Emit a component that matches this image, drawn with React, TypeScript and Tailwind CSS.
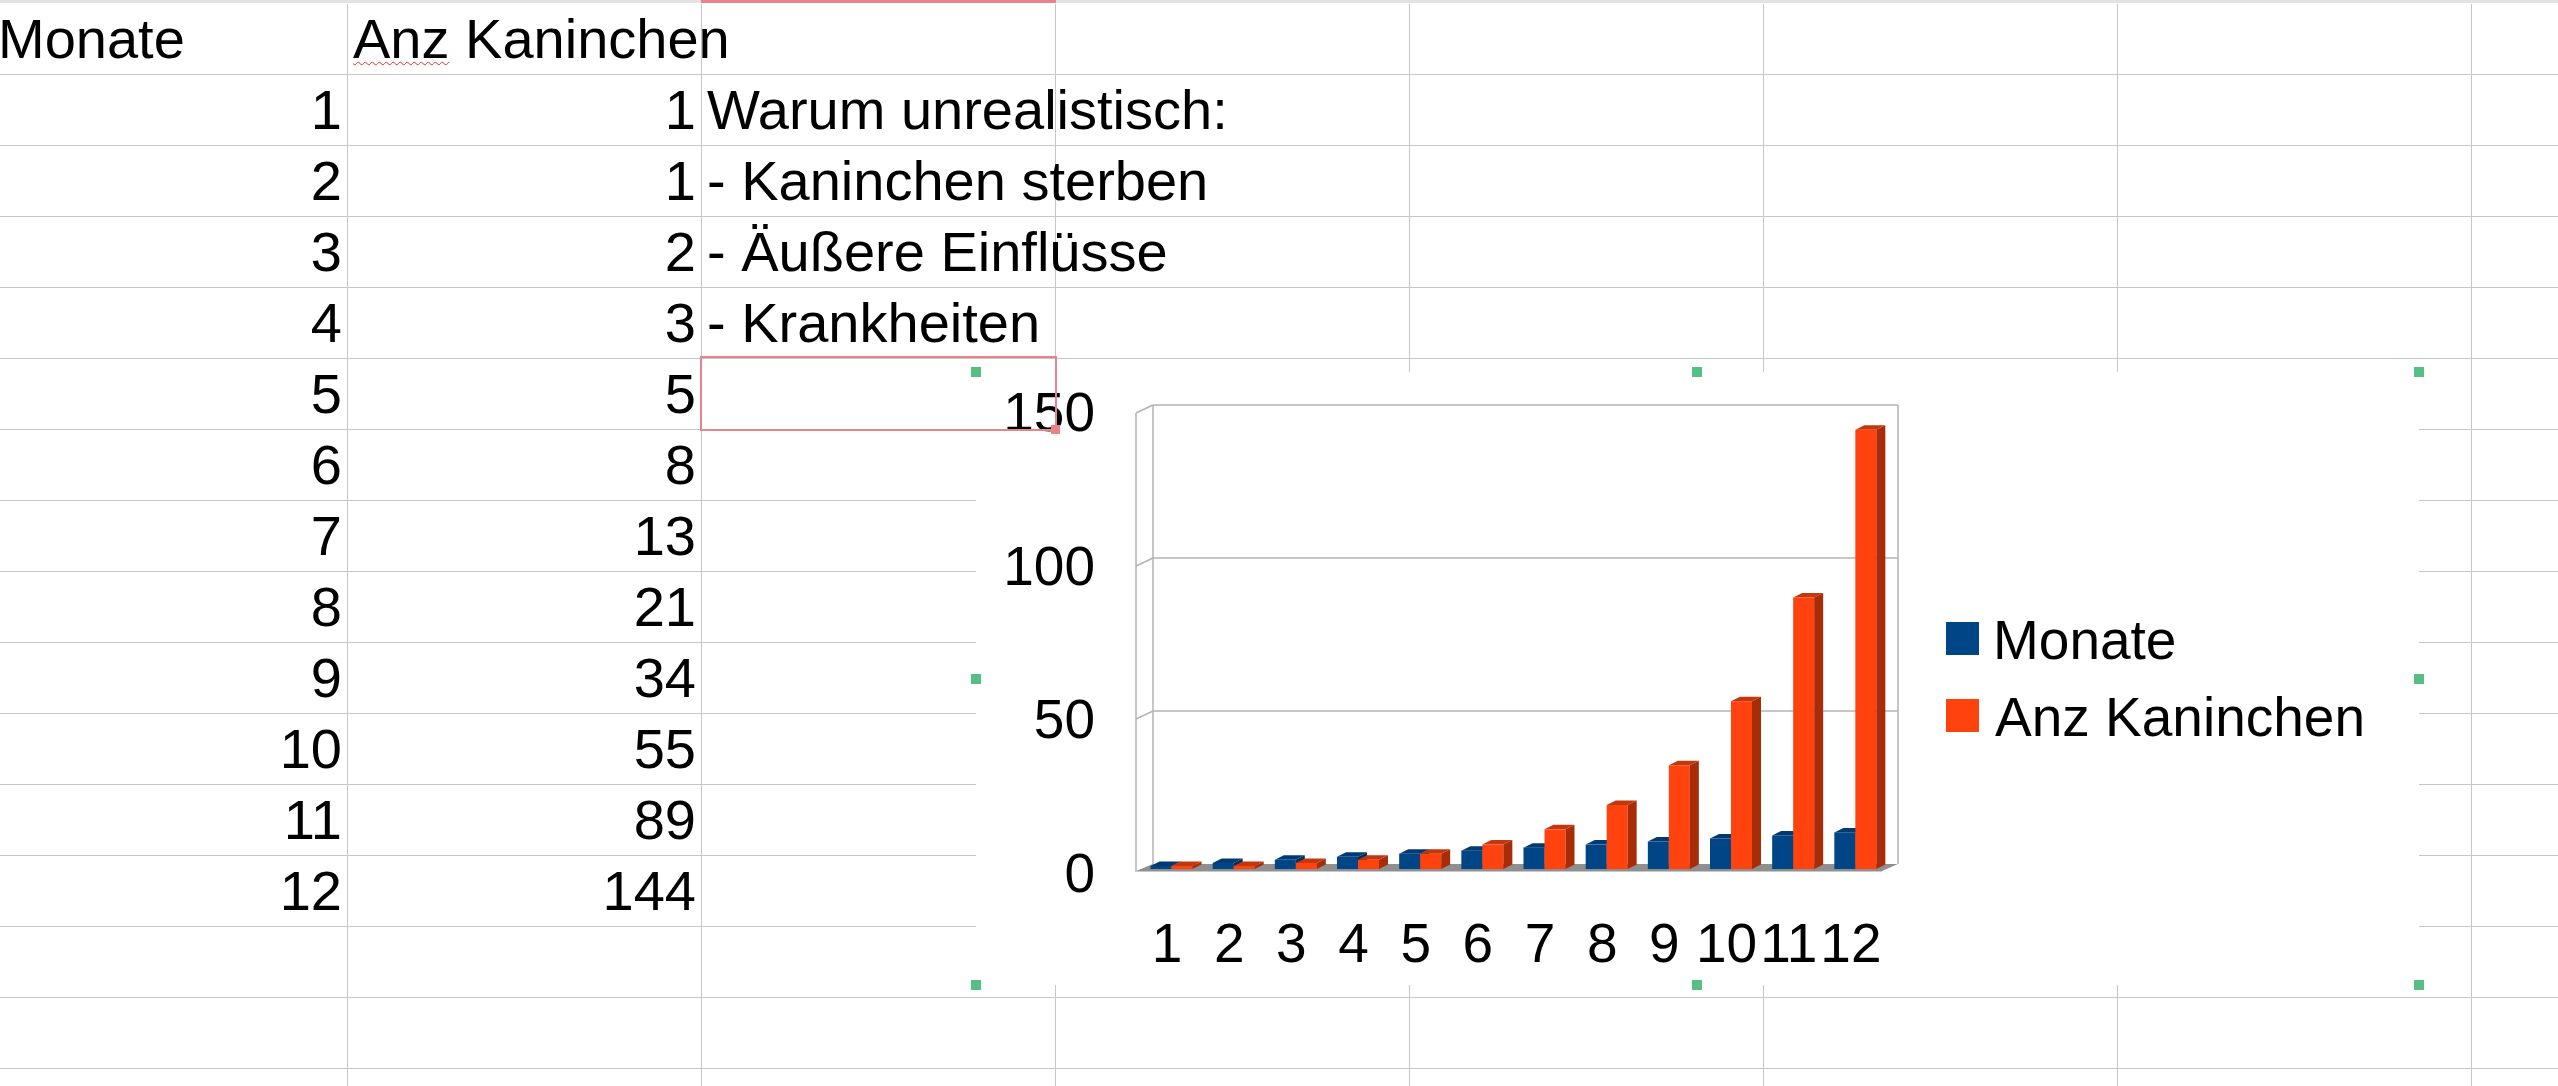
const rows: [string, string, string][] = [
  ["Monate", "Anz Kaninchen", ""],
  ["1", "1", "Warum unrealistisch:"],
  ["2", "1", "- Kaninchen sterben"],
  ["3", "2", "- Äußere Einflüsse"],
  ["4", "3", "- Krankheiten"],
  ["5", "5", ""],
  ["6", "8", ""],
  ["7", "13", ""],
  ["8", "21", ""],
  ["9", "34", ""],
  ["10", "55", ""],
  ["11", "89", ""],
  ["12", "144", ""],
  ["", "", ""],
  ["", "", ""],
  ["", "", ""],
];

const kaninchen = [1, 1, 2, 3, 5, 8, 13, 21, 34, 55, 89, 144];

// chart geometry, in page pixels
const frontLeft = 1136;
const frontRight = 1882;
const catW = (frontRight - frontLeft) / 12;
const base = 869;
const unit = 3.05;
const dx = 9;
const dy = -4.5;

function Bar({ x, w, v, front, side, top }: { x: number; w: number; v: number; front: string; side: string; top: string }) {
  const y = base - v * unit;
  return (
    <g>
      <rect x={x} y={y} width={w} height={base - y} fill={front} />
      <polygon points={`${x + w},${y} ${x + w + dx},${y + dy} ${x + w + dx},${base + dy} ${x + w},${base}`} fill={side} />
      <polygon points={`${x},${y} ${x + dx},${y + dy} ${x + w + dx},${y + dy} ${x + w},${y}`} fill={top} />
    </g>
  );
}

function Chart() {
  const grid = "#b3b3b3";
  const levels = [405, 558, 711];
  return (
    <svg width="1443" height="613" viewBox="976 372 1443 613" className="block">
      {/* floor */}
      <polygon points="1136,871 1153,864 1898,864 1882,871" fill="#8f8f8f" />
      <line x1="1135" y1="871.5" x2="1882" y2="871.5" stroke="#c8c8c8" strokeWidth="1" />
      {/* walls */}
      <line x1="1153" y1="405" x2="1153" y2="864" stroke={grid} strokeWidth="1.5" />
      <line x1="1898" y1="405" x2="1898" y2="864" stroke={grid} strokeWidth="1.5" />
      <line x1="1136" y1="413" x2="1136" y2="871" stroke={grid} strokeWidth="1.5" />
      {levels.map((y) => (
        <g key={y}>
          <line x1="1153" y1={y} x2="1898" y2={y} stroke={grid} strokeWidth="1.5" />
          <line x1="1136" y1={y + 8} x2="1153" y2={y} stroke={grid} strokeWidth="1.5" />
        </g>
      ))}

      {kaninchen.map((k, i) => {
        const x = frontLeft + catW * i + 14.5;
        return (
          <g key={i}>
            <Bar x={x} w={21} v={i + 1} front="#004586" side="#002f5c" top="#003a72" />
            <Bar x={x + 21} w={21} v={k} front="#ff420e" side="#a82c08" top="#c4360b" />
          </g>
        );
      })}

      <g fontFamily="'Liberation Sans', Arial, sans-serif" fontSize="55" fill="#000">
        {["150", "100", "50", "0"].map((t, i) => (
          <text key={t} x="1095" y={431 + i * 153.5} textAnchor="end">
            {t}
          </text>
        ))}
        {kaninchen.map((_, i) => (
          <text key={i} x={frontLeft + catW * i + catW / 2} y="962" textAnchor="middle">
            {i + 1}
          </text>
        ))}
        <rect x="1946" y="622" width="33" height="33" fill="#004586" />
        <rect x="1946" y="699" width="33" height="33" fill="#ff420e" />
        <text x="1993" y="659">Monate</text>
        <text x="1995" y="736">Anz Kaninchen</text>
      </g>
    </svg>
  );
}

function Cell({ text, right, wide }: { text: string; right?: boolean; wide?: boolean }) {
  return (
    <div
      className={`flex h-full shrink-0 items-end whitespace-nowrap border-r border-[#c6c6c6] px-[5px] pb-[7px] ${
        wide ? "w-[355px]" : "w-[354px]"
      } ${right ? "justify-end" : "justify-start"}`}
    >
      {text}
    </div>
  );
}

export default function App() {
  return (
    <div className="relative h-[1086px] w-[2558px] overflow-hidden bg-white font-['Liberation_Sans',Arial,sans-serif] text-[56px] leading-none text-black">
      {/* column header edge */}
      <div className="flex h-[3px]">
        <div className="w-[701px] bg-[#e3e3e3]" />
        <div className="w-[355px] bg-[#e8838a]" />
        <div className="flex-1 bg-[#e3e3e3]" />
      </div>

      <div className="-ml-[7px] flex flex-col pt-[1px]">
        {rows.map(([a, b, c], r) => (
          <div key={r} className="flex h-[71px] border-b border-[#c6c6c6]">
            {r === 0 ? (
              <>
                <Cell text={a} wide />
                <div className="flex h-full w-[354px] shrink-0 items-end whitespace-nowrap border-r border-[#c6c6c6] px-[5px] pb-[7px]">
                  <span className="underline decoration-[#e0302c] decoration-wavy decoration-1 underline-offset-[3px]">Anz</span>
                  &nbsp;Kaninchen
                </div>
              </>
            ) : (
              <>
                <Cell text={a} right wide />
                <Cell text={b} right />
              </>
            )}
            <Cell text={c} />
            <Cell text="" />
            <Cell text="" />
            <Cell text="" />
            <Cell text="" />
            <div className="flex-1" />
          </div>
        ))}
      </div>

      {/* embedded chart object */}
      <div className="absolute left-[976px] top-[372px] h-[613px] w-[1443px] bg-white">
        <Chart />
      </div>

      {/* chart selection handles */}
      <div className="absolute left-[971px] top-[367px] size-[10px] bg-[#55bf84]" />
      <div className="absolute left-[1692px] top-[367px] size-[10px] bg-[#55bf84]" />
      <div className="absolute left-[2414px] top-[367px] size-[10px] bg-[#55bf84]" />
      <div className="absolute left-[971px] top-[674px] size-[10px] bg-[#55bf84]" />
      <div className="absolute left-[2414px] top-[674px] size-[10px] bg-[#55bf84]" />
      <div className="absolute left-[971px] top-[980px] size-[10px] bg-[#55bf84]" />
      <div className="absolute left-[1692px] top-[980px] size-[10px] bg-[#55bf84]" />
      <div className="absolute left-[2414px] top-[980px] size-[10px] bg-[#55bf84]" />

      {/* cell cursor */}
      <div className="absolute left-[700px] top-[356px] h-[75px] w-[357px] border-2 border-[#e8838a]" />
      <div className="absolute left-[1051px] top-[425px] size-[9px] bg-[#e8838a]" />
    </div>
  );
}
